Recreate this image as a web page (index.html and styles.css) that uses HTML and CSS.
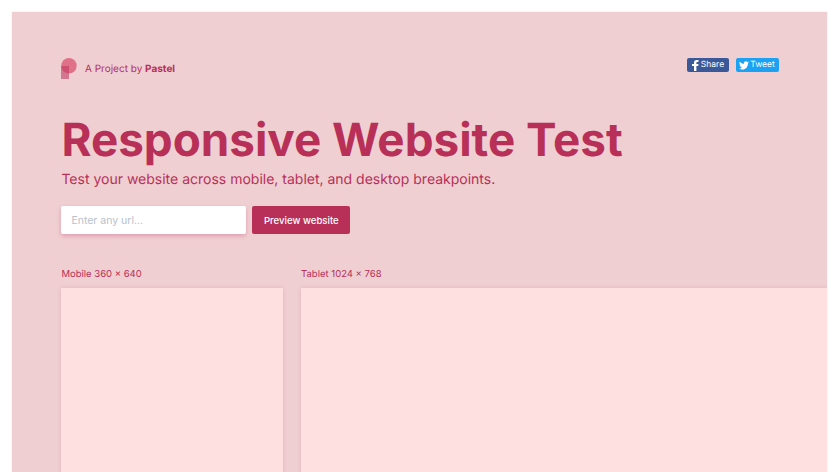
FILE: index.html
```html
<!DOCTYPE html>
<html lang="en">
<head>
<meta charset="utf-8">
<title>Responsive Website Test</title>
<link rel="stylesheet" href="styles.css">
</head>
<body>
<main class="frame">
  <header class="topbar">
    <div class="brand">
      <svg class="logo" width="16" height="21" viewBox="0 0 16 21">
        <circle cx="8" cy="7.700" r="7.700" fill="#d9536f" opacity=".75"/>
        <rect x="0" y="8" width="8" height="13" fill="#c23a62" opacity=".6"/>
      </svg>
      <span class="brand-text">A Project by <b>Pastel</b></span>
    </div>
    <div class="social">
      <a class="sbtn fb"><svg width="7" height="11" viewBox="0 0 7 11"><path d="M2 11V6H0V4H2V2.600C2 .9 3 0 4.500 0H6.500V2H5.200C4.600 2 4.400 2.300 4.400 2.800V4H6.500L6.200 6H4.400V11Z" fill="#fff"/></svg>Share</a>
      <a class="sbtn tw"><svg width="10" height="9" viewBox="0 0 24 20"><path d="M24 2.400a9.800 9.800 0 0 1-2.800.8A4.900 4.900 0 0 0 23.300.5a9.800 9.800 0 0 1-3.100 1.200 4.900 4.900 0 0 0-8.400 4.500A14 14 0 0 1 1.700 1a4.900 4.900 0 0 0 1.500 6.600 4.900 4.900 0 0 1-2.200-.6v.1a4.900 4.900 0 0 0 3.900 4.800 4.900 4.900 0 0 1-2.200.1 4.900 4.900 0 0 0 4.600 3.400A9.900 9.900 0 0 1 0 17.400 14 14 0 0 0 7.500 19.600c9.100 0 14-7.500 14-14v-.6A10 10 0 0 0 24 2.400Z" fill="#fff"/></svg>Tweet</a>
    </div>
  </header>
  <h1 class="title">Responsive Website Test</h1>
  <p class="subtitle">Test your website across mobile, tablet, and desktop breakpoints.</p>
  <form class="url-form">
    <input class="url-input" type="text" placeholder="Enter any url...">
    <button class="preview-btn" type="button">Preview website</button>
  </form>
  <section class="devices">
    <div class="device device-mobile">
      <div class="device-label">Mobile 360 × 640</div>
      <div class="screen"></div>
    </div>
    <div class="device device-tablet">
      <div class="device-label">Tablet 1024 × 768</div>
      <div class="screen"></div>
    </div>
  </section>
</main>
</body>
</html>
```
FILE: styles.css
```css
* { box-sizing: border-box; }
html, body { height: 100%; }
body {
  margin: 0;
  padding: 12px 13px 0 12px;
  background: #fff;
  overflow: hidden;
  font-family: Inter, "Liberation Sans", sans-serif;
  text-rendering: geometricPrecision;
}
.frame {
  height: 900px;
  background: #efcfd2;
  padding: 46px 0 0 49.400px;
  overflow: hidden;
  color: #b83058;
  box-shadow: 0 0 1px rgba(184, 48, 88, .25);
}
.topbar {
  display: flex;
  justify-content: space-between;
  align-items: flex-start;
  padding-right: 48.500px;
}
.brand { display: flex; align-items: center; gap: 7.600px; height: 21px; }
.logo { display: block; }
.brand-text { font-size: 10px; line-height: 20px; margin-top: 1px; }
.brand-text b { font-weight: 700; }
.social { display: flex; gap: 6.500px; }
.sbtn {
  display: flex;
  align-items: center;
  justify-content: center;
  height: 14px;
  border-radius: 2px;
  color: #fff;
  font-size: 8.500px;
  gap: 2px;
}
.tw { gap: 1px; }
.fb { width: 42px; background: #3b5998; }
.tw { width: 43px; background: #1da1f2; }
.title {
  margin: 34px 0 0;
  font-size: 45.800px;
  line-height: 56px;
  font-weight: 700;
  color: #b83058;
}
.subtitle {
  margin: 1px 0 0;
  font-size: 14px;
  line-height: 20px;
  color: #b83058;
}
.url-form { display: flex; gap: 6px; margin-top: 16px; }
.url-input {
  width: 184.800px;
  height: 28px;
  border: 0;
  border-radius: 2px;
  background: #fff;
  padding: 0 10px;
  font: 10.500px Inter, sans-serif;
  box-shadow: 0 2px 4px rgba(184, 48, 88, .3);
}
.url-input::placeholder { color: #b8c2cc; opacity: 1; }
.preview-btn {
  width: 98.300px;
  height: 28px;
  border: 0;
  border-radius: 2px;
  background: #b83058;
  color: #fff;
  font: 500 9.600px Inter, sans-serif;
}
.devices { display: flex; gap: 18.300px; margin-top: 34px; }
.device-mobile { flex: 0 0 221.400px; }
.device-tablet { flex: 0 0 1024px; }
.device-label { font-size: 9.500px; line-height: 14px; margin-bottom: 6px; }
.screen {
  height: 500px;
  background: #ffe0e1;
  box-shadow: 0 0 4px rgba(184, 48, 88, .15);
}
```
